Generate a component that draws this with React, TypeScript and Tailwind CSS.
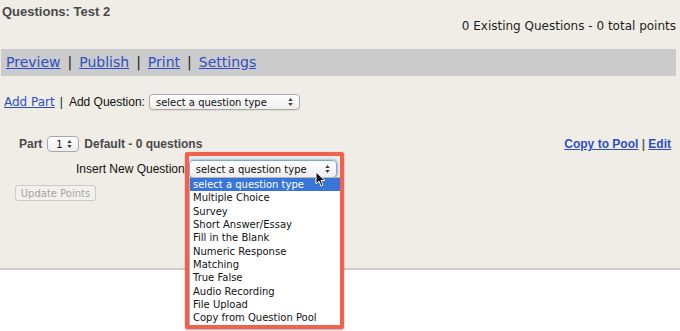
import React from "react";

const questionTypes = [
    'select a question type',
    'Multiple Choice',
    'Survey',
    'Short Answer/Essay',
    'Fill in the Blank',
    'Numeric Response',
    'Matching',
    'True False',
    'Audio Recording',
    'File Upload',
    'Copy from Question Pool',
];

const Arrows = () => (
    <svg width="5" height="9" viewBox="0 0 5 9" className="absolute right-[6px] top-1/2 -translate-y-1/2">
        <path d="M0.3 3.6 L2.5 0.6 L4.7 3.6Z" fill="#3a3a3a" />
        <path d="M0.3 5.4 L2.5 8.4 L4.7 5.4Z" fill="#3a3a3a" />
    </svg>
);

const App = () => {
    return (
        <div className="relative w-[680px] h-[331px] overflow-hidden bg-white font-['Liberation_Sans',Arial,sans-serif]">
            <div className="h-[270px] bg-[#f0ede6] border-b-2 border-[#cfcdc9]">
                {/* Header */}
                <div className="pt-[4px] pl-[2px] h-[19px] text-[13px] leading-[15px] font-bold text-[#4a4a4a]">
                    Questions: Test 2
                </div>
                <div className="pr-[4px] text-right text-[12px] leading-[14px] text-[#1e1e1e] font-['DejaVu_Sans',sans-serif]">
                    0 Existing Questions - 0 total points
                </div>

                {/* Nav bar */}
                <div className="mt-[16px] ml-[1px] mr-[4px] h-[27px] bg-[#cbcbcb] flex items-center pl-[5px] text-[14px] font-['DejaVu_Sans',sans-serif]">
                    <a className="text-[#2c4fc6] underline">Preview</a>
                    <span className="mx-[7px] text-[#222]">|</span>
                    <a className="text-[#2c4fc6] underline">Publish</a>
                    <span className="mx-[7px] text-[#222]">|</span>
                    <a className="text-[#2c4fc6] underline">Print</a>
                    <span className="mx-[7px] text-[#222]">|</span>
                    <a className="text-[#2c4fc6] underline">Settings</a>
                </div>

                {/* Add row */}
                <div className="mt-[18px] h-[16px] pl-[4px] flex items-center text-[12px]">
                    <a className="text-[#2c4fc6] underline font-['DejaVu_Sans',sans-serif]">Add Part</a>
                    <span className="ml-[5px] mr-[6px] text-[#222]">|</span>
                    <span className="text-[#111]">Add Question:</span>
                    <div className="relative ml-[4px] h-[16px] w-[151px] rounded-[4px] border border-[#a9a9a9] bg-gradient-to-b from-white to-[#eeeeee] shadow-[0_1px_1px_rgba(0,0,0,0.08)] flex items-center pl-[6px] text-[10px] text-[#111] font-['DejaVu_Sans',sans-serif]">
                        select a question type
                        <Arrows />
                    </div>
                </div>

                {/* Part row */}
                <div className="mt-[26px] h-[16px] flex items-center text-[12px]">
                    <span className="ml-[19px] font-bold text-[#4a4a4a]">Part</span>
                    <div className="relative ml-[5px] h-[16px] w-[32px] rounded-[4px] border border-[#a9a9a9] bg-gradient-to-b from-white to-[#eeeeee] flex items-center pl-[8px] text-[10px] text-[#111] font-['DejaVu_Sans',sans-serif]">
                        1
                        <Arrows />
                    </div>
                    <span className="ml-[5px] font-bold text-[#4a4a4a]">Default - 0 questions</span>
                    <div className="ml-auto mr-[9px] font-bold">
                        <a className="text-[#2c4fc6] underline">Copy to Pool</a>
                        <span className="text-[#666]"> | </span>
                        <a className="text-[#2c4fc6] underline">Edit</a>
                    </div>
                </div>

                {/* Insert row */}
                <div className="mt-[8px] h-[18px] flex items-center text-[12px]">
                    <span className="ml-[76px] text-[#111]">Insert New Question</span>
                    <div className="relative ml-[4px] h-[18px] w-[148px] rounded-[4px] border border-[#7fa6da] bg-gradient-to-b from-white to-[#eeeeee] shadow-[0_0_2px_1px_rgba(110,160,230,0.55)] flex items-center pl-[6px] text-[10px] text-[#111] font-['DejaVu_Sans',sans-serif]">
                        select a question type
                        <Arrows />
                    </div>
                </div>

                {/* Update button */}
                <div className="mt-[7px] ml-[15px] w-[81px] h-[16px] rounded-[3px] border border-[#cdcac4] bg-[#f3f1ec] flex items-center justify-center text-[10px] text-[#a3a3a3] font-['DejaVu_Sans',sans-serif]">
                    Update Points
                </div>
            </div>

            {/* Open dropdown list */}
            <ul className="absolute left-[189px] top-[177px] w-[152px] h-[150px] bg-white border border-[#b5b5b5] text-[10px] text-[#111] font-['DejaVu_Sans',sans-serif]">
                {questionTypes.map((t, idx) => (
                    <li
                        key={idx}
                        className={idx === 0
                            ? "h-[13.35px] leading-[13.35px] pl-[3px] bg-[#3875d7] text-white"
                            : "h-[13.35px] leading-[13.35px] pl-[3px]"}
                    >
                        {t}
                    </li>
                ))}
            </ul>

            {/* Highlight frame */}
            <div className="absolute left-[185px] top-[152px] w-[159px] h-[177px] border-4 border-[#f1614d] rounded-[2px] shadow-[0_1px_2px_rgba(0,0,0,0.35)]" />

            {/* Mouse pointer */}
            <svg width="11" height="16" viewBox="0 0 11 16" className="absolute left-[315px] top-[171px]">
                <path d="M1 1 L1 13 L4 10 L6 15 L8 14 L6 9.5 L10 9.5 Z" fill="#111" stroke="#fff" strokeWidth="1" strokeLinejoin="round" />
            </svg>
        </div>
    );
};

export default App;
